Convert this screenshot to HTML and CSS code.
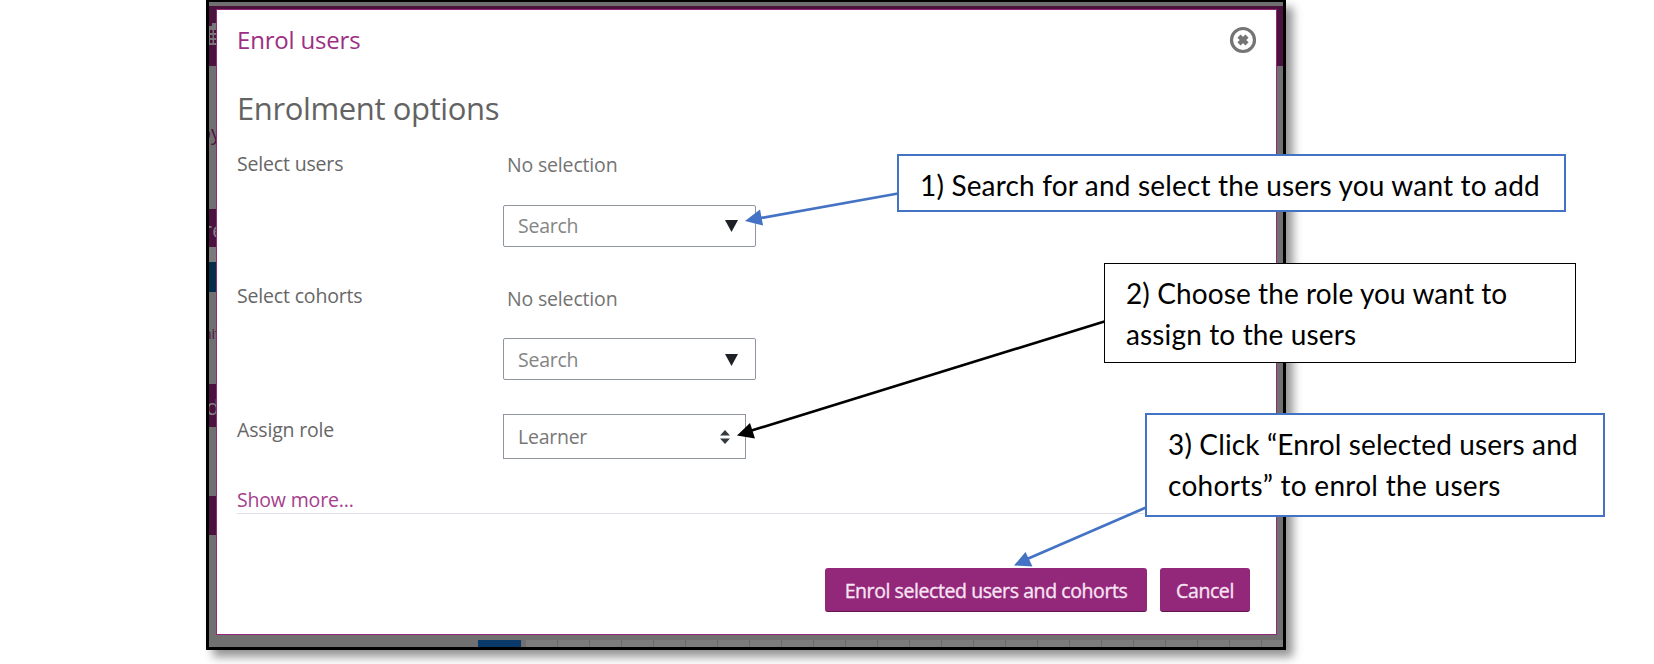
FILE: index.html
```html
<!DOCTYPE html>
<html lang="en">
<head>
<meta charset="utf-8">
<title>Enrol users</title>
<link rel="stylesheet" href="styles.css">
</head>
<body>
<main class="stage">
  <div class="frame">
    <div class="backdrop">
      <div class="band band-top">
        <svg class="building" width="8" height="28" viewBox="0 0 8 28"><path d="M0 6h3V3h5v22H0z" fill="#777"/><path d="M1 10h2.500v3H1zM5 10h2.500v3H5zM1 15h2.500v3H1zM5 15h2.500v3H5zM1 20h2.500v3H1zM5 20h2.500v3H5z" fill="#4b123d"/></svg>
      </div>
      <div class="space space-1"><span class="ghost ghost-link">oy</span></div>
      <div class="band band-2"><span class="ghost ghost-head">re</span></div>
      <div class="space space-2"></div>
      <div class="band-blue"></div>
      <div class="space space-3"><span class="ghost ghost-small">nit</span></div>
      <div class="band band-3"><span class="ghost ghost-head ghost-d">d</span></div>
      <div class="space space-4"></div>
      <div class="band band-4"></div>
      <div class="space space-5"></div>
      <div class="tabs"><i class="tab-active"></i><i class="tab-cells"></i></div>
    </div>
    <section class="modal">
      <header class="modal-head">
        <h1 class="title">Enrol users</h1>
        <svg class="close" width="28" height="28" viewBox="0 0 28 28"><circle cx="14" cy="14" r="11.5" fill="none" stroke="#757575" stroke-width="3.2"/><path d="M10 10.2l8 7.6M18 10.2l-8 7.6" stroke="#757575" stroke-width="4.6"/></svg>
      </header>
      <h2 class="heading">Enrolment options</h2>
      <div class="row">
        <label class="label">Select users</label>
        <div class="field">
          <span class="none">No selection</span>
          <div class="search"><span class="ph">Search</span><svg width="13" height="12" viewBox="0 0 13 12"><path d="M0 0h13L6.5 12z" fill="#1d2125"/></svg></div>
        </div>
      </div>
      <div class="row row-2">
        <label class="label">Select cohorts</label>
        <div class="field">
          <span class="none">No selection</span>
          <div class="search"><span class="ph">Search</span><svg width="13" height="12" viewBox="0 0 13 12"><path d="M0 0h13L6.5 12z" fill="#1d2125"/></svg></div>
        </div>
      </div>
      <div class="row row-3">
        <label class="label">Assign role</label>
        <div class="select"><span class="learner">Learner</span><svg width="10" height="14" viewBox="0 0 10 14"><path d="M0 5.5L5 0l5 5.500zM0 8.500h10L5 14z" fill="#343a40"/></svg></div>
      </div>
      <div class="more"><a class="more-link">Show more...</a></div>
      <footer class="actions">
        <button class="btn btn-enrol"><span>Enrol selected users and cohorts</span></button>
        <button class="btn btn-cancel"><span>Cancel</span></button>
      </footer>
    </section>
  </div>

  <svg class="arrows" width="1654" height="664" viewBox="0 0 1654 664">
    <g stroke="#4472c4" fill="#4472c4"><path d="M898 193.5L758 218.5" stroke-width="2.7"/><path d="M745 221L760 209.500L763 225.500z" stroke="none"/></g>
    <g stroke="#000" fill="#000"><path d="M1106 321L750 431" stroke-width="2.7"/><path d="M737 435.500L750 423L755 438.500z" stroke="none"/></g>
    <g stroke="#4472c4" fill="#4472c4"><path d="M1146 507.500L1026 559.500" stroke-width="2.7"/><path d="M1014 565.500L1025.500 552L1032.500 566.500z" stroke="none"/></g>
  </svg>
  <div class="callout callout-1"><span class="c1">1) Search for and select the users you want to add</span></div>
  <div class="callout callout-2"><span class="c2">2) Choose the role you want to</span><br><span class="c3">assign to the users</span></div>
  <div class="callout callout-3"><span class="c4">3) Click “Enrol selected users and</span><br><span class="c5">cohorts” to enrol the users</span></div>
</main>
</body>
</html>
```
FILE: styles.css
```css
* { box-sizing: border-box; }
body { margin: 0; background: #fff; font-family: "Open Sans", "Noto Sans", sans-serif; }
.stage { position: relative; width: 1654px; height: 664px; overflow: hidden; }
.frame {
  position: relative;
  width: 1080px; height: 650px; margin-left: 206px;
  border: 3px solid #000; border-top-width: 2px;
  background: #707070;
  box-shadow: 7px 7px 9px rgba(0, 0, 0, .42);
}
.backdrop { display: flex; flex-direction: column; height: 100%; overflow: hidden; padding-top: 4px; }
.backdrop > * { flex: none; overflow: hidden; white-space: nowrap; }
.band { background: #4c123e; }
.band-top { height: 60px; padding-top: 14px; }
.band-2, .band-3, .band-4, .band-blue { width: 8px; }
.band-2 { height: 38px; }
.band-3 { height: 43px; }
.band-4 { height: 39px; }
.band-blue { height: 30px; background: #052c49; }
.building { display: block; }
.space-1 { height: 143px; padding-top: 54px; width: 8px; }
.space-2 { height: 15px; width: 8px; background: #7a7a7a; }
.space-3 { height: 92px; width: 8px; padding-top: 32px; }
.space-4 { height: 69px; }
.space-5 { height: 105px; }
.ghost { display: block; }
.ghost-link { font-size: 20px; line-height: 26px; color: #4c123e; margin-left: -10px; }
.ghost-head { font-size: 22px; line-height: 40px; color: #858085; margin-left: -6px; }
.ghost-d { margin-left: -3px; line-height: 44px; }
.ghost-small { font-size: 14px; line-height: 20px; color: #4c123e; margin-left: -6px; }
.tabs { display: flex; height: 7px; padding-left: 269px; }
.tab-active { width: 43px; background: #0a3a6a; }
.tab-cells { flex: 1; margin-left: 5px; background: repeating-linear-gradient(90deg, #7c7c7c 0 31px, #6a6a6a 31px 32px); }

.modal {
  position: absolute; left: 7px; top: 7px;
  width: 1061px; height: 626px;
  padding: 0 26px 0 20px;
  background: #fff; border: 1px solid #93277a;
  color: #666;
}
.modal-head { display: flex; justify-content: space-between; height: 60px; padding-top: 16px; }
.title { margin: 0; font-weight: 400; font-size: 24px; line-height: 28px; color: #9c2f83; letter-spacing: -.18px; }
.close { display: block; margin-right: -7px; }
.heading { margin: 16px 0 0; font-weight: 400; font-size: 31px; line-height: 44px; height: 62px; color: #636363; letter-spacing: -.38px; }
.row { display: flex; height: 133px; }
.label { width: 266px; padding-top: 2px; font-size: 19.5px; line-height: 28px; letter-spacing: -.17px; }
.row-2 .label { padding-top: 1px; }
.field { padding-top: 1px; }
.none { display: block; margin-left: 4px; padding-top: 2px; font-size: 19.5px; line-height: 28px; height: 28px; color: #737373; letter-spacing: -.17px; }
.row-2 .none { padding-top: 3px; }
.search {
  display: flex; justify-content: space-between; align-items: center;
  width: 253px; height: 42px; margin-top: 28px; padding: 0 17px 0 14px;
  border: 1px solid #8f959e; border-radius: 2px; color: #858585; font-size: 19.5px; letter-spacing: -.25px;
}
.ph { margin-top: -1px; }
.row-2 .ph { margin-top: 1px; }
.row-2 .search svg { margin-top: 2px; }
.select {
  display: flex; justify-content: space-between; align-items: center;
  width: 243px; height: 45px; padding: 0 15px 0 14px;
  border: 1px solid #8f959e; color: #777; font-size: 19.5px; letter-spacing: -.25px;
}
.row-3 { height: 72px; }
.more { height: 28px; border-bottom: 1px solid #dee2e6; }
.more-link { position: relative; top: 0; font-size: 19.5px; line-height: 28px; color: #a4408c; letter-spacing: -.17px; }
.actions { display: flex; justify-content: flex-end; gap: 13px; padding-top: 54px; }
.btn {
  height: 44px; padding: 1px 0 0; border: 0; border-bottom: 1px solid #5d1749; border-radius: 3px;
  background: #93277a; color: #f8e4f3; font-family: "Open Sans", sans-serif; font-weight: 400; font-size: 19.5px;
  -webkit-text-stroke: .35px #f8e4f3; letter-spacing: -.42px; white-space: nowrap;
}
.btn-enrol { width: 322px; }
.btn-cancel { width: 90px; }

.arrows { position: absolute; left: 0; top: 0; }
.callout {
  position: absolute; background: #fff; color: #000; white-space: nowrap;
  font-family: Lato, sans-serif; font-size: 28px; line-height: 41px;
}
.callout-1 { left: 897px; top: 154px; width: 669px; height: 58px; border: 2px solid #4472c4; padding: 9px 21px; }
.callout-2 { left: 1104px; top: 263px; width: 472px; height: 100px; border: 1px solid #000; padding: 9px 21px; }
.callout-3 { left: 1145px; top: 413px; width: 460px; height: 104px; border: 2px solid #4472c4; padding: 9px 21px; }
.c1 { letter-spacing: .17px; }
.c2 { letter-spacing: .1px; }
.c3 { letter-spacing: .14px; }
.c4 { letter-spacing: .14px; }
.c5 { letter-spacing: .29px; }
```
